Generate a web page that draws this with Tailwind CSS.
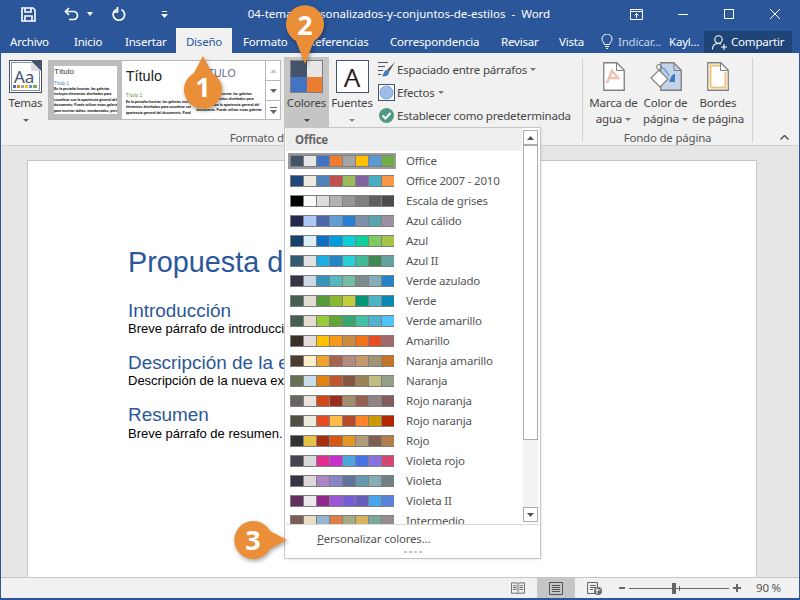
<!DOCTYPE html>
<html lang="es">
<head>
<meta charset="utf-8">
<script src="https://cdn.jsdelivr.net/npm/@tailwindcss/browser@4"></script>
</head>
<body class="m-0">
<div class="relative w-[800px] h-[600px] overflow-hidden bg-[#2b579a] px-px pb-[2px] flex flex-col font-['Noto_Sans',sans-serif] text-[11.500px] tracking-[-0.2px] text-[#444]">

  <!-- Title bar -->
  <div class="h-[28px] flex items-center text-white shrink-0">
    <svg class="ml-[20px] w-[15px] h-[15px]" viewBox="0 0 15 15" fill="none" stroke="#fff" stroke-width="1.6"><path d="M1 1h11l2 2v11H1z"/><path d="M4 1v4h6V1"/><path d="M4 14V9h7v5" /></svg>
    <svg class="ml-[28px] w-[15px] h-[14px]" viewBox="0 0 15 14" fill="none" stroke="#fff" stroke-width="1.7"><path d="M1.500 4.500h8a3.800 3.800 0 0 1 0 8H5"/><path d="M5 1L1.500 4.500 5 8"/></svg>
    <svg class="ml-[8px] w-[6px] h-[4px]" viewBox="0 0 6 4" fill="#fff"><path d="M0 0h6L3 4z"/></svg>
    <svg class="ml-[19px] w-[14px] h-[14px]" viewBox="0 0 14 14" fill="none" stroke="#fff" stroke-width="1.7"><path d="M5 2.200A5.700 5.700 0 1 0 9.500 2.500"/><path d="M5.500 0v5H1" /></svg>
    <svg class="ml-[35px] w-[7px] h-[7px]" viewBox="0 0 7 7" fill="#fff"><path d="M1 0h5v1H1zM0 3h7L3.500 7z"/></svg>
    <div class="ml-[78px] w-[306px] text-center text-[11.500px] tracking-normal whitespace-pre text-white leading-none">04-temas-personalizados-y-conjuntos-de-estilos  -  Word</div>
    <svg class="ml-[78px] w-[13px] h-[11px]" viewBox="0 0 13 11" fill="none" stroke="#fff"><path d="M.5.500h12v10H.5zM.5 2.500h12M6.500 9V4.500M4.500 6.500l2-2 2 2"/></svg>
    <div class="ml-[35px] w-[10px] h-px bg-white"></div>
    <div class="ml-[36px] w-[10px] h-[10px] border border-white"></div>
    <svg class="ml-[36px] w-[10px] h-[10px]" viewBox="0 0 10 10" stroke="#fff" fill="none"><path d="M0 0l10 10M10 0L0 10"/></svg>
  </div>

  <!-- Tabs -->
  <div class="h-[25px] flex items-stretch text-white shrink-0 leading-[27px]">
    <span class="ml-[9px] w-[41px]">Archivo</span>
    <span class="ml-[23px] w-[30px]">Inicio</span>
    <span class="ml-[21px] w-[40px]">Insertar</span>
    <span class="ml-[11px] w-[56px] bg-[#f1f1f1] text-[#2b579a] text-center">Diseño</span>
    <span class="ml-[11px] w-[45px]">Formato</span>
    <span class="ml-[20px] w-[62px]">Referencias</span>
    <span class="ml-[20px] w-[90px]">Correspondencia</span>
    <span class="ml-[21px] w-[38px]">Revisar</span>
    <span class="ml-[20px] w-[26px]">Vista</span>
    <svg class="ml-[16px] mt-[6px] w-[12px] h-[15px]" viewBox="0 0 12 15" fill="none" stroke="#fff"><path d="M3.500 10.500C3 8 1 7.500 1 5a5 5 0 0 1 10 0c0 2.500-2 3-2.500 5.500zM4 12.500h4M5 14.500h2"/></svg>
    <span class="ml-[5px] w-[46px] text-[#c6d4e8]">Indicar...</span>
    <span class="ml-[5px] w-[30px]">Kayl...</span>
    <div class="ml-[5px] mt-[3px] w-[88px] h-[22px] bg-[#1e4478] flex items-center leading-none">
      <svg class="ml-[8px] w-[15px] h-[15px]" viewBox="0 0 15 15" fill="none" stroke="#fff" stroke-width="1.100"><circle cx="6.500" cy="4.500" r="3.700"/><path d="M.5 14.500c0-4 2.500-6 6-6 1 0 2 .2 2.500.6M9 12h6M12 9v6"/></svg>
      <span class="ml-[4px]">Compartir</span>
    </div>
  </div>

  <!-- Ribbon -->
  <div class="h-[93px] bg-[#f1f1f1] border-b border-[#d2d2d2] flex shrink-0">
    <!-- Group: Formato de documento -->
    <div class="w-[581px] flex flex-col">
      <div class="h-[74px] pt-[4px] flex items-start">
        <!-- Temas -->
        <div class="ml-[2px] w-[45px] h-[70px] flex flex-col items-center">
          <svg class="mt-[3px] w-[33px] h-[33px]" viewBox="0 0 33 33">
            <rect x=".5" y=".5" width="32" height="32" fill="#fff" stroke="#44546a"/>
            <rect x="2.500" y="2.500" width="28" height="28" fill="#fff" stroke="#8a94a3"/>
            <path d="M22 1h10v10z" fill="#44546a"/><path d="M22 1v10h10z" fill="#d9dce1"/>
            <text x="5" y="23" font-family="Noto Sans" font-size="17" fill="#44546a">Aa</text>
            <rect x="4" y="25" width="3" height="3" fill="#4472c4"/><rect x="8" y="25" width="3" height="3" fill="#ed7d31"/><rect x="12" y="25" width="3" height="3" fill="#a5a5a5"/><rect x="16" y="25" width="3" height="3" fill="#ffc000"/><rect x="20" y="25" width="3" height="3" fill="#5b9bd5"/><rect x="24" y="25" width="4" height="3" fill="#70ad47"/>
          </svg>
          <span class="mt-[2px] leading-[16px]">Temas</span>
          <svg class="mt-[8px] w-[6px] h-[3px]" viewBox="0 0 6 3" fill="#666"><path d="M0 0h6L3 3z"/></svg>
        </div>
        <!-- Gallery -->
        <div class="mt-[3px] w-[233px] h-[60px] bg-white border border-[#b9b9b9] flex overflow-hidden tracking-normal">
          <div class="w-[73px] h-full border-[5px] border-[#bdbdbd] overflow-hidden whitespace-nowrap font-['Liberation_Sans',sans-serif] text-black">
            <div class="text-[8px] leading-[10px] mt-[1px] text-[#333]">Título</div>
            <div class="text-[4.500px] leading-[6px] mt-[4px] text-[#4472c4]">Título 1</div>
            <div class="text-[3.400px] leading-[5.400px] font-bold">En la pestaña Insertar, las galerías<br>incluyen elementos diseñados para<br>coordinar con la apariencia general del<br>documento. Puede utilizar estas galerías<br>para insertar tablas, encabezados, pies de</div>
          </div>
          <div class="ml-[4px] w-[66px] h-full overflow-hidden whitespace-nowrap font-['Liberation_Sans',sans-serif] text-black">
            <div class="text-[14.500px] leading-[18px] mt-[6px] text-[#222]">Título</div>
            <div class="text-[5px] leading-[6px] mt-[7px] text-[#6b8e3a]">Título 1</div>
            <div class="text-[3.400px] leading-[5.400px] mt-[2px] font-bold">En la pestaña Insertar, las galerías incluyen<br>elementos diseñados para coordinar con la<br>apariencia general del documento. Puede</div>
          </div>
          <div class="ml-[5px] w-[69px] h-full overflow-hidden whitespace-nowrap font-['Liberation_Sans',sans-serif] text-black">
            <div class="text-[10.500px] leading-[14px] mt-[5px] pl-[2px] text-[#5a6b85]">TÍTULO</div>
            <div class="text-[3.400px] leading-[5.400px] mt-[12px] font-bold">En la pestaña Insertar, las galerías<br>incluyen elementos diseñados para<br>coordinar con la apariencia general del<br>documento. Puede utilizar estas galerías</div>
          </div>
          <div class="w-[15px] ml-auto flex flex-col border-l border-[#b9b9b9] bg-white shrink-0">
            <div class="h-[20px] flex items-center justify-center border-b border-[#b9b9b9]"><svg class="w-[7px] h-[4px]" viewBox="0 0 7 4" fill="#c8c8c8"><path d="M0 4h7L3.500 0z"/></svg></div>
            <div class="h-[20px] flex items-center justify-center border-b border-[#b9b9b9]"><svg class="w-[7px] h-[4px]" viewBox="0 0 7 4" fill="#666"><path d="M0 0h7L3.500 4z"/></svg></div>
            <div class="flex-1 flex items-center justify-center"><svg class="w-[7px] h-[7px]" viewBox="0 0 7 7" fill="#666"><path d="M0 0h7v1H0zM0 3h7L3.500 7z"/></svg></div>
          </div>
        </div>
        <!-- Colores -->
        <div class="ml-[3px] w-[45px] h-[70px] bg-[#c5c5c5] flex flex-col items-center">
          <div class="mt-[3px] w-[33px] h-[33px] border border-[#7f7f7f] grid grid-cols-2 grid-rows-2">
            <div class="bg-[#44546a]"></div><div class="bg-[#e7e6e6]"></div><div class="bg-[#4472c4]"></div><div class="bg-[#ed7d31]"></div>
          </div>
          <span class="mt-[2px] leading-[16px]">Colores</span>
          <svg class="mt-[8px] w-[6px] h-[3px]" viewBox="0 0 6 3" fill="#444"><path d="M0 0h6L3 3z"/></svg>
        </div>
        <!-- Fuentes -->
        <div class="w-[46px] h-[70px] flex flex-col items-center">
          <div class="mt-[3px] w-[33px] h-[33px] border border-[#44546a] bg-white flex items-center justify-center font-['Noto_Sans',sans-serif] font-light text-[26px] leading-none text-[#111] [text-shadow:0.6px_0_#e98a3a,-0.6px_0_#3f7cc4]">A</div>
          <span class="mt-[2px] leading-[16px]">Fuentes</span>
          <svg class="mt-[8px] w-[6px] h-[3px]" viewBox="0 0 6 3" fill="#888"><path d="M0 0h6L3 3z"/></svg>
        </div>
        <!-- Small commands -->
        <div class="ml-[3px] flex flex-col whitespace-nowrap">
          <div class="h-[23px] mt-[1px] flex items-center">
            <svg class="w-[17px] h-[17px]" viewBox="0 0 17 17" fill="none"><path d="M0 1.500h10M0 5.500h7M0 9.500h5M0 13.500h3" stroke="#555"/><path d="M17 1L9 9l2 2z" fill="#555"/><path d="M9 9c-3 0-3 4-5 6 3 1 7 0 7-4z" fill="#3f7cc4"/></svg>
            <span class="ml-[2px]">Espaciado entre párrafos</span>
            <svg class="ml-[3px] w-[6px] h-[3px]" viewBox="0 0 6 3" fill="#777"><path d="M0 0h6L3 3z"/></svg>
          </div>
          <div class="h-[23px] flex items-center">
            <svg class="w-[17px] h-[17px]" viewBox="0 0 17 17"><rect x=".5" y=".5" width="16" height="16" fill="#fff" stroke="#44546a"/><circle cx="8.500" cy="8.500" r="6.500" fill="#9dbde8" stroke="#7ea4d8"/></svg>
            <span class="ml-[2px]">Efectos</span>
            <svg class="ml-[3px] w-[6px] h-[3px]" viewBox="0 0 6 3" fill="#777"><path d="M0 0h6L3 3z"/></svg>
          </div>
          <div class="h-[23px] flex items-center">
            <svg class="w-[15px] h-[15px] ml-px mr-px" viewBox="0 0 15 15"><circle cx="7.500" cy="7.500" r="7.500" fill="#4e9a82"/><path d="M3.500 7.500l3 3 5-5.500" stroke="#fff" stroke-width="2" fill="none"/></svg>
            <span class="ml-[2px]">Establecer como predeterminada</span>
          </div>
        </div>
      </div>
      <div class="mt-[2px] h-[18px] text-center text-[#555] leading-[18px] whitespace-nowrap">Formato de documento</div>
    </div>
    <div class="mt-[5px] w-px h-[84px] bg-[#d2d2d2]"></div>
    <!-- Group: Fondo de página -->
    <div class="w-[169px] flex flex-col">
      <div class="h-[74px] pt-[4px] flex items-start leading-[16px] text-center">
        <div class="ml-[2px] w-[57px] flex flex-col items-center">
          <svg class="mt-[5px] w-[22px] h-[29px]" viewBox="0 0 22 29"><path d="M.75.75h13l7.500 7.500v20H.75z" fill="#fff" stroke="#7f7f7f" stroke-width="1.300"/><path d="M13.500 1v7.500H21" fill="none" stroke="#7f7f7f"/><path d="M4 21L9 9l7 8M6 16h9" fill="none" stroke="#efc1b3" stroke-width="2.600"/></svg>
          <span class="mt-[4px]">Marca de</span>
          <span class="flex items-center">agua<svg class="ml-[3px] w-[6px] h-[3px]" viewBox="0 0 6 3" fill="#777"><path d="M0 0h6L3 3z"/></svg></span>
        </div>
        <div class="w-[47px] flex flex-col items-center">
          <svg class="mt-[5px] w-[32px] h-[29px]" viewBox="0 0 32 29"><path d="M10.750.75h13l7.500 7.500v20h-20.500z" fill="#c4d3e8" stroke="#7f7f7f" stroke-width="1.300"/><path d="M24 1v7.500h7.500" fill="none" stroke="#7f7f7f"/><path d="M25 12c-4 0-4 4-6 8h6z" fill="#3f7cc4"/><path d="M9 8l9 9-8 8-9-9z" fill="#fff" stroke="#7f7f7f" stroke-width="1.200"/><circle cx="9" cy="5" r="2.500" fill="none" stroke="#7f7f7f"/><path d="M12 6c3 0 5 4 7 8" stroke="#7ba6d9" stroke-width="2" fill="none"/></svg>
          <span class="mt-[4px] whitespace-nowrap">Color de</span>
          <span class="flex items-center">página<svg class="ml-[3px] w-[6px] h-[3px]" viewBox="0 0 6 3" fill="#777"><path d="M0 0h6L3 3z"/></svg></span>
        </div>
        <div class="w-[58px] flex flex-col items-center">
          <svg class="mt-[5px] w-[22px] h-[29px]" viewBox="0 0 22 29"><path d="M.75.75h13l7.500 7.500v20H.75z" fill="#fff" stroke="#7f7f7f" stroke-width="1.300"/><path d="M13.500 1v7.500H21" fill="none" stroke="#7f7f7f"/><path d="M3.500 25.500V3.500h9.500M18.500 10v15.500h-15" fill="none" stroke="#ecc377" stroke-width="2"/></svg>
          <span class="mt-[4px]">Bordes</span>
          <span class="whitespace-nowrap">de página</span>
        </div>
      </div>
      <div class="mt-[2px] h-[18px] text-center text-[#555] leading-[18px]">Fondo de página</div>
    </div>
    <div class="mt-[5px] w-px h-[84px] bg-[#d2d2d2]"></div>
    <div class="flex-1 flex items-end justify-end pr-[10px] pb-[5px]">
      <svg class="w-[9px] h-[5px]" viewBox="0 0 9 5" fill="none" stroke="#555" stroke-width="1.500"><path d="M.5 4.500l4-4 4 4"/></svg>
    </div>
  </div>

  <!-- Document area -->
  <div class="flex-1 min-h-0 bg-[#e6e6e6] pl-[26px] pt-[14px] overflow-hidden tracking-normal">
    <div class="w-[730px] h-[420px] bg-white border border-[#c6c6c6] pl-[100px] pt-[82px] font-['Liberation_Sans',sans-serif] text-black">
      <div class="text-[28.800px] leading-[38px] text-[#2b579a]">Propuesta de proyecto</div>
      <div class="mt-[19px] text-[18.900px] leading-[22px] text-[#2b579a]">Introducción</div>
      <div class="text-[13px] leading-[14px]">Breve párrafo de introducción.</div>
      <div class="mt-[16px] text-[18.900px] leading-[22px] text-[#2b579a]">Descripción de la empresa</div>
      <div class="text-[13px] leading-[14px]">Descripción de la nueva experiencia.</div>
      <div class="mt-[16px] text-[18.900px] leading-[22px] text-[#2b579a]">Resumen</div>
      <div class="mt-px text-[13px] leading-[14px]">Breve párrafo de resumen.</div>
    </div>
  </div>

  <!-- Status bar -->
  <div class="h-[21px] bg-[#f1f1f1] border-t border-[#c6c6c6] flex items-center shrink-0 text-[#555]">
    <svg class="ml-[510px] w-[14px] h-[13px]" viewBox="0 0 15 13" fill="none" stroke="#666"><path d="M.5.5h6l1 1 1-1h6v11h-6l-1 1-1-1h-6zM7.500 1.500v10M2 3.500h4M2 5.500h4M2 7.500h4M9 3.500h4M9 5.500h4M9 7.500h4"/></svg>
    <div class="ml-[12px] w-[38px] h-full bg-[#c6c6c6] flex items-center justify-center">
      <svg class="w-[14px] h-[13px]" viewBox="0 0 14 13" fill="none" stroke="#555"><path d="M.5.500h13v12H.5zM3 3.500h8M3 5.500h8M3 7.500h8M3 9.500h8"/></svg>
    </div>
    <svg class="ml-[12px] w-[15px] h-[13px]" viewBox="0 0 15 13"><path d="M.5.500h10v11H.5zM3 3.500h6M3 5.500h6M3 7.500h3" fill="none" stroke="#666"/><circle cx="11" cy="9" r="4" fill="#666"/><path d="M8.500 8h5M10 6v6" stroke="#fff"/></svg>
    <div class="ml-[17px] w-[6px] h-[2px] bg-[#666]"></div>
    <div class="ml-[4px] w-[100px] h-px bg-[#666] flex items-center">
      <div class="ml-[43px] w-[4px] h-[11px] bg-[#666] shrink-0"></div>
      <div class="ml-[3px] w-px h-[5px] bg-[#666] shrink-0"></div>
    </div>
    <svg class="ml-[4px] w-[8px] h-[8px]" viewBox="0 0 8 8" stroke="#666" stroke-width="2"><path d="M0 4h8M4 0v8"/></svg>
    <span class="ml-[15px] leading-none">90 %</span>
  </div>

  <!-- Colors dropdown -->
  <div class="absolute left-[284px] top-[127px] w-[257px] h-[432px] bg-white border border-[#c6c6c6] flex flex-col text-[#555] shadow-[1px_1px_2px_rgba(0,0,0,0.08)]">
    <div class="h-[396px] flex">
      <div class="w-[238px] h-full overflow-hidden">
        <div class="h-[23px] bg-[#eeeeee] font-bold leading-[23px] pl-[9px] mx-[1px] text-[#666]">Office</div>
        <div class="h-[20px] flex items-center ml-[3px]"><div class="h-[16px] w-[108px] border-[2px] border-[#9c9c9c] flex items-center"><div class="h-[12px] flex gap-px py-px pl-px bg-[#808080] *:w-[12px]"><i class="bg-[#44546a]"></i><i class="bg-[#e7e6e6]"></i><i class="bg-[#4472c4]"></i><i class="bg-[#ed7d31]"></i><i class="bg-[#a5a5a5]"></i><i class="bg-[#ffc000]"></i><i class="bg-[#5b9bd5]"></i><i class="bg-[#70ad47]"></i></div></div><span class="ml-[10px]">Office</span></div>
        <div class="h-[20px] flex items-center ml-[5px]"><div class="h-[12px] flex gap-px py-px pl-px bg-[#808080] *:w-[12px]"><i class="bg-[#1f497d]"></i><i class="bg-[#eeece1]"></i><i class="bg-[#4f81bd]"></i><i class="bg-[#c0504d]"></i><i class="bg-[#9bbb59]"></i><i class="bg-[#8064a2]"></i><i class="bg-[#4bacc6]"></i><i class="bg-[#f79646]"></i></div><span class="ml-[12px]">Office 2007 - 2010</span></div>
        <div class="h-[20px] flex items-center ml-[5px]"><div class="h-[12px] flex gap-px py-px pl-px bg-[#808080] *:w-[12px]"><i class="bg-[#000000]"></i><i class="bg-[#f8f8f8]"></i><i class="bg-[#dddddd]"></i><i class="bg-[#b2b2b2]"></i><i class="bg-[#969696]"></i><i class="bg-[#808080]"></i><i class="bg-[#5f5f5f]"></i><i class="bg-[#4d4d4d]"></i></div><span class="ml-[12px]">Escala de grises</span></div>
        <div class="h-[20px] flex items-center ml-[5px]"><div class="h-[12px] flex gap-px py-px pl-px bg-[#808080] *:w-[12px]"><i class="bg-[#242852]"></i><i class="bg-[#acc8f5]"></i><i class="bg-[#4a66ac]"></i><i class="bg-[#629dd1]"></i><i class="bg-[#297fd5]"></i><i class="bg-[#7f8fa9]"></i><i class="bg-[#5aa2ae]"></i><i class="bg-[#9d90a0]"></i></div><span class="ml-[12px]">Azul cálido</span></div>
        <div class="h-[20px] flex items-center ml-[5px]"><div class="h-[12px] flex gap-px py-px pl-px bg-[#808080] *:w-[12px]"><i class="bg-[#17406d]"></i><i class="bg-[#dbeff9]"></i><i class="bg-[#0f6fc6]"></i><i class="bg-[#009dd9]"></i><i class="bg-[#0bd0d9]"></i><i class="bg-[#10cf9b]"></i><i class="bg-[#7cca62]"></i><i class="bg-[#a5c249]"></i></div><span class="ml-[12px]">Azul</span></div>
        <div class="h-[20px] flex items-center ml-[5px]"><div class="h-[12px] flex gap-px py-px pl-px bg-[#808080] *:w-[12px]"><i class="bg-[#335b74]"></i><i class="bg-[#dfe3e5]"></i><i class="bg-[#1cade4]"></i><i class="bg-[#2683c6]"></i><i class="bg-[#27ced7]"></i><i class="bg-[#42ba97]"></i><i class="bg-[#3e8853]"></i><i class="bg-[#62a39f]"></i></div><span class="ml-[12px]">Azul II</span></div>
        <div class="h-[20px] flex items-center ml-[5px]"><div class="h-[12px] flex gap-px py-px pl-px bg-[#808080] *:w-[12px]"><i class="bg-[#373545]"></i><i class="bg-[#ced9e6]"></i><i class="bg-[#3494ba]"></i><i class="bg-[#58b6c0]"></i><i class="bg-[#75bda7]"></i><i class="bg-[#7a8c8e]"></i><i class="bg-[#84acb6]"></i><i class="bg-[#2683c6]"></i></div><span class="ml-[12px]">Verde azulado</span></div>
        <div class="h-[20px] flex items-center ml-[5px]"><div class="h-[12px] flex gap-px py-px pl-px bg-[#808080] *:w-[12px]"><i class="bg-[#455f51]"></i><i class="bg-[#e3ded1]"></i><i class="bg-[#549e39]"></i><i class="bg-[#8ab833]"></i><i class="bg-[#c0cf3a]"></i><i class="bg-[#029676]"></i><i class="bg-[#4ab5c4]"></i><i class="bg-[#0989b1]"></i></div><span class="ml-[12px]">Verde</span></div>
        <div class="h-[20px] flex items-center ml-[5px]"><div class="h-[12px] flex gap-px py-px pl-px bg-[#808080] *:w-[12px]"><i class="bg-[#455f51]"></i><i class="bg-[#e3ded1]"></i><i class="bg-[#99cb38]"></i><i class="bg-[#63a537]"></i><i class="bg-[#37a76f]"></i><i class="bg-[#44c1a3]"></i><i class="bg-[#4eb3cf]"></i><i class="bg-[#51c3f9]"></i></div><span class="ml-[12px]">Verde amarillo</span></div>
        <div class="h-[20px] flex items-center ml-[5px]"><div class="h-[12px] flex gap-px py-px pl-px bg-[#808080] *:w-[12px]"><i class="bg-[#39302a]"></i><i class="bg-[#e5dedb]"></i><i class="bg-[#ffc000]"></i><i class="bg-[#f79a1c]"></i><i class="bg-[#cc8b3f]"></i><i class="bg-[#f07318]"></i><i class="bg-[#e84c22]"></i><i class="bg-[#9f6a6a]"></i></div><span class="ml-[12px]">Amarillo</span></div>
        <div class="h-[20px] flex items-center ml-[5px]"><div class="h-[12px] flex gap-px py-px pl-px bg-[#808080] *:w-[12px]"><i class="bg-[#4e3b30]"></i><i class="bg-[#fbeec9]"></i><i class="bg-[#f0a22e]"></i><i class="bg-[#a5644e]"></i><i class="bg-[#b58b80]"></i><i class="bg-[#c3986d]"></i><i class="bg-[#a19574]"></i><i class="bg-[#c17529]"></i></div><span class="ml-[12px]">Naranja amarillo</span></div>
        <div class="h-[20px] flex items-center ml-[5px]"><div class="h-[12px] flex gap-px py-px pl-px bg-[#808080] *:w-[12px]"><i class="bg-[#637052]"></i><i class="bg-[#ccddea]"></i><i class="bg-[#e48312]"></i><i class="bg-[#bd582c]"></i><i class="bg-[#865640]"></i><i class="bg-[#9b8357]"></i><i class="bg-[#c2bc80]"></i><i class="bg-[#94a088]"></i></div><span class="ml-[12px]">Naranja</span></div>
        <div class="h-[20px] flex items-center ml-[5px]"><div class="h-[12px] flex gap-px py-px pl-px bg-[#808080] *:w-[12px]"><i class="bg-[#696464]"></i><i class="bg-[#e9e5dc]"></i><i class="bg-[#d34817]"></i><i class="bg-[#9b2d1f]"></i><i class="bg-[#a28e6a]"></i><i class="bg-[#956251]"></i><i class="bg-[#918485]"></i><i class="bg-[#855d5d]"></i></div><span class="ml-[12px]">Rojo naranja</span></div>
        <div class="h-[20px] flex items-center ml-[5px]"><div class="h-[12px] flex gap-px py-px pl-px bg-[#808080] *:w-[12px]"><i class="bg-[#505046]"></i><i class="bg-[#eeece0]"></i><i class="bg-[#e84c22]"></i><i class="bg-[#ffbd47]"></i><i class="bg-[#b64926]"></i><i class="bg-[#ff8427]"></i><i class="bg-[#cc9900]"></i><i class="bg-[#b22600]"></i></div><span class="ml-[12px]">Rojo naranja</span></div>
        <div class="h-[20px] flex items-center ml-[5px]"><div class="h-[12px] flex gap-px py-px pl-px bg-[#808080] *:w-[12px]"><i class="bg-[#323232]"></i><i class="bg-[#e5c243]"></i><i class="bg-[#a5300f]"></i><i class="bg-[#d55816]"></i><i class="bg-[#e19825]"></i><i class="bg-[#b19c7d]"></i><i class="bg-[#7f5f52]"></i><i class="bg-[#b27d49]"></i></div><span class="ml-[12px]">Rojo</span></div>
        <div class="h-[20px] flex items-center ml-[5px]"><div class="h-[12px] flex gap-px py-px pl-px bg-[#808080] *:w-[12px]"><i class="bg-[#454551]"></i><i class="bg-[#d8d9dc]"></i><i class="bg-[#e32d91]"></i><i class="bg-[#c830cc]"></i><i class="bg-[#4ea6dc]"></i><i class="bg-[#4775e7]"></i><i class="bg-[#8971e1]"></i><i class="bg-[#d54773]"></i></div><span class="ml-[12px]">Violeta rojo</span></div>
        <div class="h-[20px] flex items-center ml-[5px]"><div class="h-[12px] flex gap-px py-px pl-px bg-[#808080] *:w-[12px]"><i class="bg-[#373545]"></i><i class="bg-[#dcd8dc]"></i><i class="bg-[#ad84c6]"></i><i class="bg-[#8784c7]"></i><i class="bg-[#5d739a]"></i><i class="bg-[#6997af]"></i><i class="bg-[#84acb6]"></i><i class="bg-[#6f8183]"></i></div><span class="ml-[12px]">Violeta</span></div>
        <div class="h-[20px] flex items-center ml-[5px]"><div class="h-[12px] flex gap-px py-px pl-px bg-[#808080] *:w-[12px]"><i class="bg-[#632e62]"></i><i class="bg-[#eaeaea]"></i><i class="bg-[#92278f]"></i><i class="bg-[#9b57d3]"></i><i class="bg-[#755dd9]"></i><i class="bg-[#665eb8]"></i><i class="bg-[#45a5ed]"></i><i class="bg-[#5982db]"></i></div><span class="ml-[12px]">Violeta II</span></div>
        <div class="h-[20px] flex items-center ml-[5px]"><div class="h-[12px] flex gap-px py-px pl-px bg-[#808080] *:w-[12px]"><i class="bg-[#775f55]"></i><i class="bg-[#ebddc3]"></i><i class="bg-[#94b6d2]"></i><i class="bg-[#dd8047]"></i><i class="bg-[#a5ab81]"></i><i class="bg-[#d8b25c]"></i><i class="bg-[#7ba79d]"></i><i class="bg-[#968c8c]"></i></div><span class="ml-[12px]">Intermedio</span></div>
      </div>
      <div class="w-[15px] mt-[2px] h-[392px] bg-[#f3f3f3] flex flex-col">
        <div class="h-[15px] bg-white border border-[#ababab] flex items-center justify-center shrink-0"><svg class="w-[7px] h-[4px]" viewBox="0 0 7 4" fill="#555"><path d="M0 4h7L3.500 0z"/></svg></div>
        <div class="h-[295px] bg-white border border-[#ababab] shrink-0"></div>
        <div class="mt-auto h-[15px] bg-white border border-[#ababab] flex items-center justify-center shrink-0"><svg class="w-[7px] h-[4px]" viewBox="0 0 7 4" fill="#555"><path d="M0 0h7L3.500 4z"/></svg></div>
      </div>
    </div>
    <div class="h-px bg-[#d9d9d9] mx-px"></div>
    <div class="h-[26px] pl-[32px] leading-[27px]"><span class="underline">P</span>ersonalizar colores...</div>
    <div class="flex justify-center gap-[2px]"><b class="w-[3px] h-[2px] bg-[#c8c8c8]"></b><b class="w-[3px] h-[2px] bg-[#c8c8c8]"></b><b class="w-[3px] h-[2px] bg-[#c8c8c8]"></b><b class="w-[3px] h-[2px] bg-[#c8c8c8]"></b></div>
  </div>

  <!-- Callout 1 -->
  <svg class="absolute left-[180px] top-[52px] w-[46px] h-[58px] drop-shadow-[1px_2px_2px_rgba(0,0,0,0.35)]" viewBox="0 0 46 58"><path d="M23 4l9 17a19 19 0 1 1-18 0z" fill="#ea8f38"/></svg>
  <span class="absolute left-[180px] top-[69px] w-[46px] text-center text-white font-['Open_Sans',sans-serif] font-bold text-[27px] tracking-normal leading-[36px]">1</span>
  <!-- Callout 2 -->
  <svg class="absolute left-[282px] top-0 w-[46px] h-[65px] drop-shadow-[1px_2px_2px_rgba(0,0,0,0.35)]" viewBox="0 0 46 65"><path d="M23 64l-9-23a19 19 0 1 1 18 0z" fill="#ea8f38"/></svg>
  <span class="absolute left-[282px] top-[7px] w-[46px] text-center text-white font-['Open_Sans',sans-serif] font-bold text-[27px] tracking-normal leading-[36px]">2</span>
  <!-- Callout 3 -->
  <svg class="absolute left-[232px] top-[518px] w-[56px] h-[44px] drop-shadow-[1px_2px_2px_rgba(0,0,0,0.35)]" viewBox="0 0 56 44"><path d="M55 22l-17 9a19 19 0 1 1 0-18z" fill="#ea8f38"/></svg>
  <span class="absolute left-[232px] top-[522px] w-[42px] text-center text-white font-['Open_Sans',sans-serif] font-bold text-[27px] tracking-normal leading-[36px]">3</span>
</div>
</body>
</html>
